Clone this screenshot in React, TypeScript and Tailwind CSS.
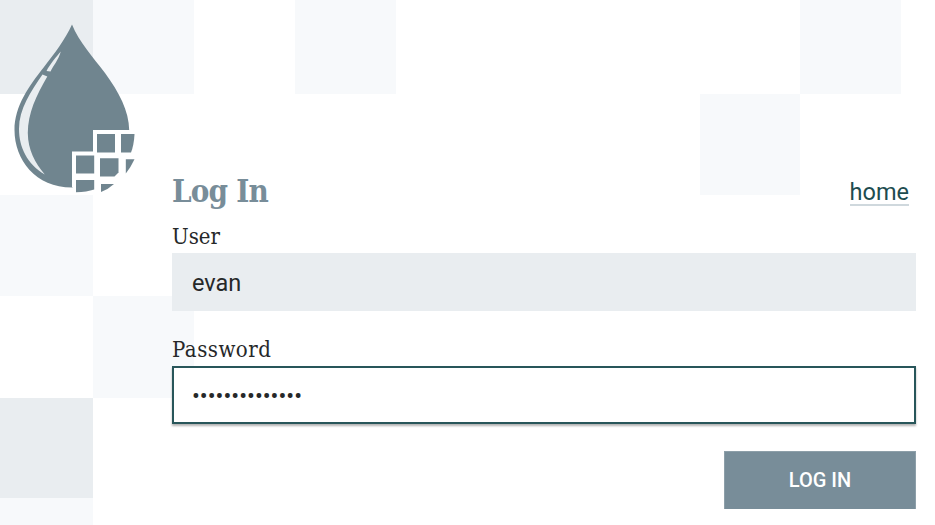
import { useState } from "react";

const tints: Record<string, string> = {
  "0-0": "bg-[#e9edf0]",
  "0-1": "bg-[#f7f9fb]",
  "0-3": "bg-[#f7f9fb]",
  "0-8": "bg-[#f7f9fb]",
  "1-7": "bg-[#f7f9fb]",
  "2-0": "bg-[#f7f9fb]",
  "3-1": "bg-[#f7f9fb]",
  "4-0": "bg-[#e9edf0]",
  "5-0": "bg-[#f7f9fb]",
};

function Checkerboard() {
  return (
    <div
      aria-hidden="true"
      className="col-start-1 row-start-1 grid h-[525px] grid-cols-[93px_repeat(6,101.1px)_100.4px_101.5px_34px] grid-rows-[94px_100.5px_101.5px_101.5px_100.5px_27px] overflow-hidden"
    >
      {Array.from({ length: 60 }, (_, i) => {
        const key = `${Math.floor(i / 10)}-${i % 10}`;
        return <div key={key} className={tints[key] ?? ""} />;
      })}
    </div>
  );
}

function Logo() {
  return (
    <svg viewBox="0 0 140 200" className="h-[200px] w-[140px]" role="img" aria-label="Water drop">
      <path
        fill="#70858f"
        d="M72 24.5C79 42 93 57 105 73C119 92 129 111 129.2 130V131H94V152H73V187.5C36 188 14.5 160 14.5 130C14.5 106 29 86 44 67C54 54 65 40 72 24.5Z"
      />
      <path fill="#fff" d="M93 130H130V151L118 187.5H72V151.5H93Z" />
      <path fill="#e9edf0" d="M60.8 51.5C57 56 50 64 46.5 71L50.5 71.5C53 66 58.5 60 60.8 51.5Z" />
      <path
        fill="#e9edf0"
        d="M42.5 74.5L47.3 76.5C36 96 28 113 27.8 133C28 150 35 163 44.8 174.5C27 164 19 147 19 129C19 109 31 91 42.5 74.5Z"
      />
      <g fill="#70858f">
        <path d="M97 134H115V152.5H97Z" />
        <path d="M121 134H134.5Q134 145 131 152.5H121Z" />
        <path d="M76 155.5H94.2V173.5H76Z" />
        <path d="M100 158.3H118.5V172.5L114.5 176.5H100Z" />
        <path d="M125.8 159.3H134.5Q131 167 125.8 173.5Z" />
        <path d="M76 180H94.2V189.5Q87 192 76 192.3Z" />
        <path d="M101 184H114Q108 189.5 101 192Z" />
      </g>
    </svg>
  );
}

const slab = "font-['Roboto_Slab','DejaVu_Serif_Condensed','DejaVu_Serif',serif]";

export default function App() {
  const [user, setUser] = useState("evan");
  const [password, setPassword] = useState("••••••••••••••");
  return (
    <div className="grid h-[525px] w-[935px] grid-cols-1 grid-rows-1 overflow-hidden bg-white font-[Roboto,sans-serif] text-[#262829]">
      <Checkerboard />
      <div className="z-10 col-start-1 row-start-1 flex">
        <div className="w-[172px] shrink-0">
          <Logo />
        </div>
        <form className="flex w-[744px] flex-col pt-[171px]" onSubmit={(e) => e.preventDefault()}>
          <header className="flex h-[40px] items-center justify-between pr-[7px]">
            <h1 className={`${slab} text-[31px] leading-[38px] font-bold tracking-[-0.8px] text-[#788d99]`}>Log In</h1>
            <a
              href="#home"
              className="mt-[3px] border-b-2 border-[#cfd8dd] pt-[2px] text-[23.5px] leading-[23px] text-[#1d4c50]"
            >
              home
            </a>
          </header>
          <label htmlFor="user" className={`${slab} mt-[10px] h-[32px] text-[22px] leading-[31px]`}>
            User
          </label>
          <input
            id="user"
            value={user}
            onChange={(e) => setUser(e.target.value)}
            className="h-[58px] w-full bg-[#e9edf0] px-[20px] pt-[2px] text-[23.5px] outline-none"
          />
          <label htmlFor="password" className={`${slab} mt-[23px] h-[32px] text-[22px] leading-[31px] tracking-[0.5px]`}>
            Password
          </label>
          <input
            id="password"
            value={password}
            onChange={(e) => setPassword(e.target.value)}
            className="h-[58px] w-full border-2 border-[#28565a] bg-white px-[18px] pt-[1px] text-[23.3px] shadow-[0_2px_2px_rgba(0,0,0,0.3)] outline-none"
          />
          <button className="mt-[27px] h-[58px] w-[192px] self-end border border-b-0 border-[#8d9fa9] bg-[#788d99] pb-[1px] text-[20px] font-medium text-white">
            LOG IN
          </button>
        </form>
      </div>
    </div>
  );
}
